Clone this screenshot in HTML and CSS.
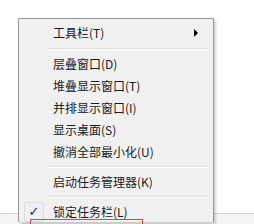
FILE: index.html
```html
<!DOCTYPE html>
<html>
<head>
<meta charset="utf-8">
<link rel="stylesheet" href="styles.css">
</head>
<body>
<div class="page">
  <div class="top"></div>
  <div class="bottom"></div>
</div>
<div class="menu">
  <div class="item"><span class="label">工具栏(T)</span><span class="arrow"></span></div>
  <div class="sep"></div>
  <div class="item"><span class="label">层叠窗口(D)</span></div>
  <div class="item"><span class="label">堆叠显示窗口(T)</span></div>
  <div class="item"><span class="label">并排显示窗口(I)</span></div>
  <div class="item"><span class="label">显示桌面(S)</span></div>
  <div class="item"><span class="label">撤消全部最小化(U)</span></div>
  <div class="sep"></div>
  <div class="item"><span class="label">启动任务管理器(K)</span></div>
  <div class="sep"></div>
  <div class="item checked"><span class="check">✓</span><span class="label">锁定任务栏(L)</span></div>
  <div class="item hover"></div>
</div>
<div class="annot"></div>
</body>
</html>
```
FILE: styles.css
```css
html, body {
  margin: 0;
  padding: 0;
  background: #ffffff;
  overflow: hidden;
  width: 254px;
  height: 224px;
}
.page {
  display: flex;
  flex-direction: column;
  width: 254px;
  height: 224px;
}
.top {
  height: 213px;
  background: #ffffff;
}
.bottom {
  flex: 1;
  border-top: 1px solid #d6d6d6;
  background: #f4f4f4;
}
.menu {
  position: absolute;
  left: 18px;
  top: 18px;
  width: 190px;
  height: 200px;
  border: 1px solid #979797;
  border-bottom: none;
  background: #f0f0f0;
  padding: 3px 2px 0 2px;
  box-shadow: 2px 2px 2px rgba(0,0,0,0.18);
  font-family: "Noto Sans CJK SC", "Microsoft YaHei", sans-serif;
  font-size: 12px;
  color: #1a1a1a;
}
.item {
  position: relative;
  height: 22px;
  display: flex;
  align-items: center;
  padding-left: 32px;
  padding-right: 8px;
  box-sizing: border-box;
  border: 1px solid transparent;
  border-radius: 3px;
}
.label {
  flex: 1;
  line-height: 22px;
  margin-left: -1px;
}
.arrow {
  width: 0;
  height: 0;
  border-top: 4px solid transparent;
  border-bottom: 4px solid transparent;
  border-left: 4px solid #000;
  margin-right: 4px;
}
.sep {
  height: 1px;
  margin: 3px 2px 3px 27px;
  background: #e0e0e0;
  border-bottom: 1px solid #ffffff;
}
.menu .sep:nth-of-type(2) { margin-top: 4px; margin-bottom: 3px; }
.menu .sep:nth-of-type(3) { margin-top: 4px; margin-bottom: 3px; }
.check {
  position: absolute;
  left: 2px;
  top: 0px;
  width: 20px;
  height: 20px;
  box-sizing: border-box;
  border: 1px solid #d8dde6;
  border-radius: 3px;
  background: #eef0f4;
  color: #1b2a6a;
  font-family: "DejaVu Sans", sans-serif;
  font-size: 13px;
  line-height: 18px;
  text-align: center;
  font-weight: bold;
}
.hover {
  border-color: #a8d8f0;
  background: #e8f4fb;
}
.annot {
  position: absolute;
  left: 30px;
  top: 219px;
  width: 111px;
  height: 20px;
  border: 1px solid #d04a4a;
}
```
